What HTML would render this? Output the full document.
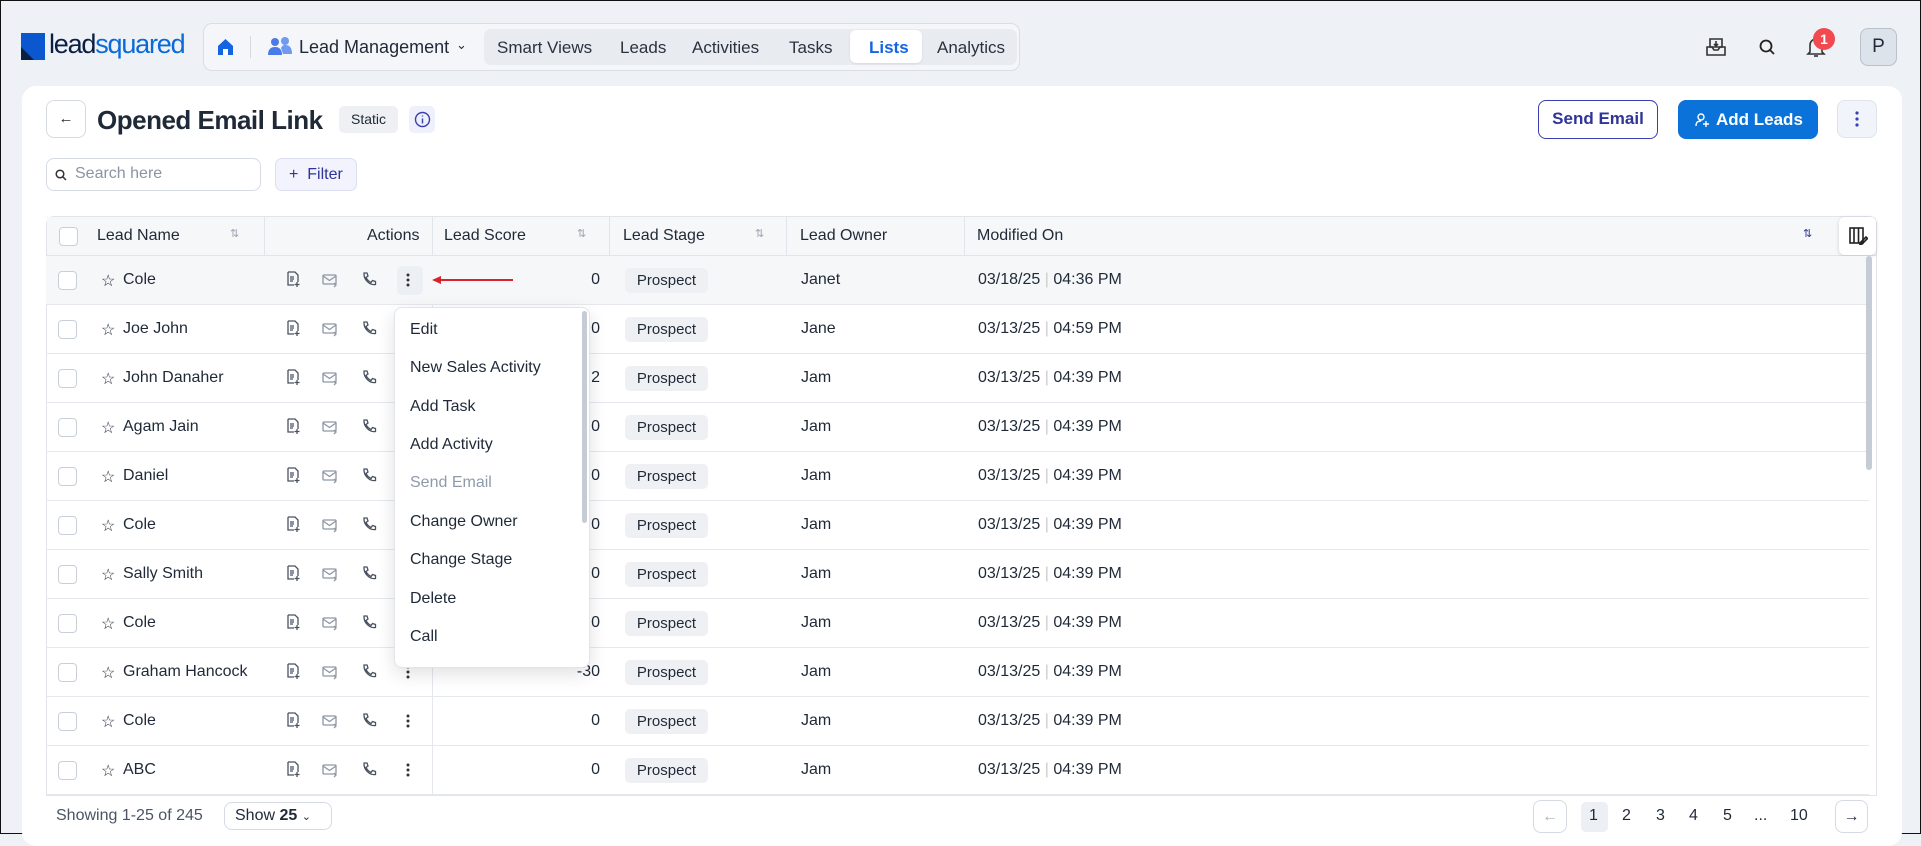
<!DOCTYPE html>
<html><head><meta charset="utf-8"><style>
*{box-sizing:border-box;margin:0;padding:0}
body{width:1921px;height:834px;overflow:hidden;background:#eef1f5;font-family:"Liberation Sans",sans-serif;color:#1f2937;position:relative;border:1px solid #111}
.a{position:absolute}
.nav{left:202px;top:22px;width:817px;height:48px;border:1px solid #d9dee6;border-radius:9px;background:#f4f6f9}
.tabs{left:483px;top:28px;width:533px;height:36px;background:#e8ebf0;border-radius:7px}
.tab{position:absolute;top:37px;font-size:17px;color:#2a3240}
.card{left:21px;top:85px;width:1880px;height:760px;background:#fff;border-radius:14px}
.btn{border:1px solid #d6dbe3;border-radius:8px;background:#fff}
.row{position:absolute;left:45px;width:1823px;height:49px;border-bottom:1px solid #e5e8ed;font-size:16px}
.row span{position:absolute;top:15px}
.row span.s{left:440px;width:114px;text-align:right}
.cb{position:absolute;left:12px;top:15px;width:19px;height:19px;border:1.5px solid #c9cfd8;border-radius:4px;background:#fff}
.pill{position:absolute;left:579px;top:12px;width:83px;height:25px;background:#eef0f3;border-radius:5px;font-size:15px;line-height:25px;text-align:center;color:#1f2937}
.menu{left:393px;top:306px;width:196px;height:361px;background:#fff;border:1px solid #e1e5eb;border-radius:8px;box-shadow:0 6px 18px rgba(0,0,0,.12)}
.menu div{position:absolute;left:15px;font-size:16px;color:#1f2937}
.pg{position:absolute;top:806px;font-size:16px;color:#1f2937}
.d{color:#ccc}
</style></head><body>
<div class="a" style="left:20px;top:32px;width:24px;height:27px;background:#0b57d0"></div>
<div class="a" style="left:20px;top:46px;width:0;height:0;border-left:13px solid #0a1f44;border-top:13px solid transparent"></div>
<div class="a" style="left:48px;top:28px;font-size:27px;letter-spacing:-1.2px;color:#0a1f44">lead<span style="color:#0b6ad9">squared</span></div>
<div class="a nav"></div>
<svg class="a" style="left:216px;top:37px" width="17" height="18" viewBox="0 0 17 18"><path d="M1 8L8.5 1 16 8V17H1Z" fill="#1565e0"/><rect x="6" y="11" width="5" height="6" fill="#fff"/></svg>
<div class="a" style="left:249px;top:35px;width:1px;height:22px;background:#d5dae2"></div>
<svg class="a" style="left:266px;top:35px" width="26" height="20" viewBox="0 0 26 20"><circle cx="8" cy="6" r="4" fill="#4a7be8"/><circle cx="18" cy="5" r="4" fill="#6f9af0"/><path d="M1 19c0-6 3-8 7-8s7 2 7 8z" fill="#4a7be8"/><path d="M14 12c1-2 2-3 4-3 4 0 7 2 7 9h-9z" fill="#6f9af0"/></svg>
<div class="a" style="left:298px;top:36px;font-size:18px;color:#1f2937">Lead Management</div>
<div class="a" style="left:455px;top:36px;font-size:13px">&#8964;</div>
<div class="a tabs"></div>
<div class="a" style="left:849px;top:29px;width:72px;height:33px;background:#fff;border-radius:6px;box-shadow:0 1px 2px rgba(0,0,0,.08)"></div>
<div class="tab" style="left:496px">Smart Views</div>
<div class="tab" style="left:619px">Leads</div>
<div class="tab" style="left:691px">Activities</div>
<div class="tab" style="left:788px">Tasks</div>
<div class="tab" style="left:868px;color:#1565e0;font-weight:bold">Lists</div>
<div class="tab" style="left:936px">Analytics</div>
<svg class="a" style="left:1704px;top:35px" width="22" height="22" viewBox="0 0 22 22" fill="none" stroke="#333" stroke-width="1.6"><path d="M5 3h12v8H5z"/><path d="M2 11h5l2 3h4l2-3h5v8H2z"/><path d="M11 5v5M9 8l2 2 2-2"/></svg>
<svg class="a" style="left:1757px;top:37px" width="18" height="18" viewBox="0 0 18 18" fill="none" stroke="#222" stroke-width="1.8"><circle cx="8" cy="8" r="5.5"/><path d="M12 12l4 4"/></svg>
<svg class="a" style="left:1805px;top:35px" width="20" height="22" viewBox="0 0 20 22" fill="none" stroke="#333" stroke-width="1.6"><path d="M4 16V9a6 6 0 0112 0v7l2 2H2z"/><path d="M8 20h4"/></svg>
<div class="a" style="left:1812px;top:27px;width:22px;height:22px;border-radius:50%;background:#f0494f;color:#fff;font-size:14px;font-weight:bold;text-align:center;line-height:22px">1</div>
<div class="a" style="left:1859px;top:27px;width:37px;height:38px;border-radius:8px;background:#dde3ea;border:1px solid #b8c1cc;font-size:19px;text-align:center;line-height:36px;color:#1f2937">P</div>
<div class="a card"></div>
<div class="a btn" style="left:45px;top:99px;width:40px;height:38px;text-align:center;line-height:36px;font-size:15px">&#8592;</div>
<div class="a" style="left:96px;top:104px;font-size:26px;font-weight:bold;color:#1f2937;letter-spacing:-0.5px">Opened Email Link</div>
<div class="a" style="left:338px;top:105px;width:59px;height:27px;background:#eef0f3;border-radius:5px;font-size:14px;text-align:center;line-height:27px">Static</div>
<div class="a" style="left:408px;top:105px;width:26px;height:27px;background:#eef0fb;border-radius:5px"></div>
<svg class="a" style="left:413px;top:110px" width="17" height="17" viewBox="0 0 17 17" fill="none" stroke="#3a3fb0" stroke-width="1.4"><circle cx="8.5" cy="8.5" r="7"/><path d="M8.5 7.5v5M8.5 4.5v1"/></svg>
<div class="a" style="left:1537px;top:99px;width:120px;height:39px;border:1.5px solid #3a3fb0;border-radius:8px;color:#2e3499;font-weight:bold;font-size:17px;text-align:center;line-height:36px">Send Email</div>
<div class="a" style="left:1677px;top:99px;width:140px;height:39px;background:#0a72d8;border-radius:8px;color:#fff;font-weight:bold;font-size:17px;line-height:39px;padding-left:38px">Add Leads</div>
<svg class="a" style="left:1694px;top:111px" width="16" height="16" viewBox="0 0 16 16" fill="none" stroke="#fff" stroke-width="1.4"><circle cx="6" cy="5" r="3"/><path d="M1 14c0-4 2-5 5-5M11 9v6M8 12h6"/></svg>
<div class="a" style="left:1836px;top:99px;width:40px;height:38px;background:#f2f4fb;border:1px solid #dfe3ea;border-radius:8px"></div>
<svg class="a" style="left:1836px;top:99px" width="40" height="38"><circle cx="20" cy="13" r="1.6" fill="#3a3fb0"/><circle cx="20" cy="19" r="1.6" fill="#3a3fb0"/><circle cx="20" cy="25" r="1.6" fill="#3a3fb0"/></svg>
<div class="a btn" style="left:45px;top:157px;width:215px;height:33px"></div>
<svg class="a" style="left:54px;top:168px" width="12" height="12" viewBox="0 0 12 12" fill="none" stroke="#333" stroke-width="1.5"><circle cx="5" cy="5" r="3.8"/><path d="M8 8l3 3"/></svg>
<div class="a" style="left:74px;top:164px;font-size:16px;color:#8a94a3">Search here</div>
<div class="a" style="left:274px;top:157px;width:82px;height:33px;background:#f2f3fc;border:1px solid #dcdff0;border-radius:7px;color:#2e3499;font-size:16px;line-height:31px;padding-left:13px">+&nbsp; Filter</div>
<div class="a" style="left:45px;top:215px;width:1831px;height:580px;border:1px solid #e1e5eb;border-radius:8px 8px 0 0"></div>
<div class="a" style="left:46px;top:216px;width:1829px;height:39px;background:#f5f7f9;border-bottom:1px solid #e1e5eb;font-size:16px">
<div class="cb" style="top:10px"></div>
<span class="a" style="left:50px;top:10px">Lead Name</span><span class="a" style="left:183px;top:10px;font-size:11px;color:#9aa3b0">&#8645;</span>
<span class="a" style="left:217px;top:-1px;width:1px;height:40px;background:#e1e5eb"></span>
<span class="a" style="left:320px;top:10px">Actions</span>
<span class="a" style="left:385px;top:-1px;width:1px;height:40px;background:#e1e5eb"></span>
<span class="a" style="left:397px;top:10px">Lead Score</span><span class="a" style="left:530px;top:10px;font-size:11px;color:#9aa3b0">&#8645;</span>
<span class="a" style="left:562px;top:-1px;width:1px;height:40px;background:#e1e5eb"></span>
<span class="a" style="left:576px;top:10px">Lead Stage</span><span class="a" style="left:708px;top:10px;font-size:11px;color:#9aa3b0">&#8645;</span>
<span class="a" style="left:739px;top:-1px;width:1px;height:40px;background:#e1e5eb"></span>
<span class="a" style="left:753px;top:10px">Lead Owner</span>
<span class="a" style="left:917px;top:-1px;width:1px;height:40px;background:#e1e5eb"></span>
<span class="a" style="left:930px;top:10px">Modified On</span><span class="a" style="left:1756px;top:10px;font-size:11px;color:#2e3499">&#8645;</span>
</div>
<div class="a" style="left:1838px;top:216px;width:37px;height:38px;background:#fff;border-radius:6px;box-shadow:0 1px 4px rgba(0,0,0,.15)"></div>
<svg class="a" style="left:1848px;top:225px" width="19" height="19" viewBox="0 0 19 19" fill="none" stroke="#222" stroke-width="1.6"><rect x="1" y="2" width="13" height="15"/><path d="M5 2v15M9.5 2v15M11 17l6-6 1.5 1.5-6 6h-1.5z"/></svg>
<div class="a" style="left:431px;top:304px;width:1px;height:490px;background:#e5e8ed"></div>

<div class="row" style="top:255px;background:#f5f7f9"><div class="cb"></div><span style="left:55px">☆</span><span style="left:77px">Cole</span><span class="s">0</span><div class="pill">Prospect</div><span style="left:755px">Janet</span><span style="left:932px">03/18/25 <span class="d" style="position:static">|</span> 04:36 PM</span></div>
<div class="row" style="top:304px"><div class="cb"></div><span style="left:55px">☆</span><span style="left:77px">Joe John</span><span class="s">0</span><div class="pill">Prospect</div><span style="left:755px">Jane</span><span style="left:932px">03/13/25 <span class="d" style="position:static">|</span> 04:59 PM</span></div>
<div class="row" style="top:353px"><div class="cb"></div><span style="left:55px">☆</span><span style="left:77px">John Danaher</span><span class="s">2</span><div class="pill">Prospect</div><span style="left:755px">Jam</span><span style="left:932px">03/13/25 <span class="d" style="position:static">|</span> 04:39 PM</span></div>
<div class="row" style="top:402px"><div class="cb"></div><span style="left:55px">☆</span><span style="left:77px">Agam Jain</span><span class="s">0</span><div class="pill">Prospect</div><span style="left:755px">Jam</span><span style="left:932px">03/13/25 <span class="d" style="position:static">|</span> 04:39 PM</span></div>
<div class="row" style="top:451px"><div class="cb"></div><span style="left:55px">☆</span><span style="left:77px">Daniel</span><span class="s">0</span><div class="pill">Prospect</div><span style="left:755px">Jam</span><span style="left:932px">03/13/25 <span class="d" style="position:static">|</span> 04:39 PM</span></div>
<div class="row" style="top:500px"><div class="cb"></div><span style="left:55px">☆</span><span style="left:77px">Cole</span><span class="s">0</span><div class="pill">Prospect</div><span style="left:755px">Jam</span><span style="left:932px">03/13/25 <span class="d" style="position:static">|</span> 04:39 PM</span></div>
<div class="row" style="top:549px"><div class="cb"></div><span style="left:55px">☆</span><span style="left:77px">Sally Smith</span><span class="s">0</span><div class="pill">Prospect</div><span style="left:755px">Jam</span><span style="left:932px">03/13/25 <span class="d" style="position:static">|</span> 04:39 PM</span></div>
<div class="row" style="top:598px"><div class="cb"></div><span style="left:55px">☆</span><span style="left:77px">Cole</span><span class="s">0</span><div class="pill">Prospect</div><span style="left:755px">Jam</span><span style="left:932px">03/13/25 <span class="d" style="position:static">|</span> 04:39 PM</span></div>
<div class="row" style="top:647px"><div class="cb"></div><span style="left:55px">☆</span><span style="left:77px">Graham Hancock</span><span class="s">-30</span><div class="pill">Prospect</div><span style="left:755px">Jam</span><span style="left:932px">03/13/25 <span class="d" style="position:static">|</span> 04:39 PM</span></div>
<div class="row" style="top:696px"><div class="cb"></div><span style="left:55px">☆</span><span style="left:77px">Cole</span><span class="s">0</span><div class="pill">Prospect</div><span style="left:755px">Jam</span><span style="left:932px">03/13/25 <span class="d" style="position:static">|</span> 04:39 PM</span></div>
<div class="row" style="top:745px"><div class="cb"></div><span style="left:55px">☆</span><span style="left:77px">ABC</span><span class="s">0</span><div class="pill">Prospect</div><span style="left:755px">Jam</span><span style="left:932px">03/13/25 <span class="d" style="position:static">|</span> 04:39 PM</span></div>

<svg class="a" style="left:0;top:0" width="1921" height="834">
<defs>
<g id="doc" fill="none" stroke="#4a5260" stroke-width="1.3"><path d="M2 1h7l3 3v7M2 1v13h6"/><path d="M4 6h4M4 8h4M4 10h3"/><path d="M11 11v5M8.5 13.5h5"/></g>
<g id="mail" fill="none" stroke="#8c96a4" stroke-width="1.3"><rect x="1" y="3" width="13" height="9" rx="1"/><path d="M1 4l6.5 4.5L14 4M12 11l2 2-2 2"/></g>
<g id="ph" fill="none" stroke="#4a5260" stroke-width="1.3"><path d="M3 1l3 0 1 3-2 1.5c1 2 3 4 5 5L11.5 8.5l3 1v3c-6 1-12-5-11.5-11.5z"/></g>
<g id="kb" fill="#333"><circle cx="0" cy="-5" r="1.5"/><circle cx="0" cy="0" r="1.5"/><circle cx="0" cy="5" r="1.5"/></g>
</defs>
<rect x="396" y="265" width="26" height="29" rx="5" fill="#eceff3"/>
<g id="r">
<use href="#doc" x="285" y="270"/><use href="#mail" x="321" y="271"/><use href="#ph" x="360" y="271"/><use href="#kb" x="407" y="279"/>
</g>
<use href="#r" y="49"/><use href="#r" y="98"/><use href="#r" y="147"/><use href="#r" y="196"/><use href="#r" y="245"/><use href="#r" y="294"/><use href="#r" y="343"/><use href="#r" y="392"/><use href="#r" y="441"/><use href="#r" y="490"/>
<path d="M438 279H512" stroke="#d8232a" stroke-width="2"/><path d="M431 279l9-4v8z" fill="#d8232a"/>
<rect x="1865" y="255" width="6" height="214" rx="3" fill="#c5ccd6"/>
</svg>

<div class="a menu">
<div style="top:13px">Edit</div>
<div style="top:51px">New Sales Activity</div>
<div style="top:90px">Add Task</div>
<div style="top:128px">Add Activity</div>
<div style="top:166px;color:#8f9aab">Send Email</div>
<div style="top:205px">Change Owner</div>
<div style="top:243px">Change Stage</div>
<div style="top:282px">Delete</div>
<div style="top:320px">Call</div>
<span class="a" style="left:187px;top:3px;width:5px;height:212px;border-radius:3px;background:#c5ccd6"></span>
</div>

<div class="a" style="left:55px;top:806px;font-size:16px;color:#4a5463">Showing 1-25 of 245</div>
<div class="a btn" style="left:223px;top:801px;width:108px;height:28px;font-size:16px;line-height:26px;padding-left:10px">Show <b>25</b> <span style="font-size:11px">&#8964;</span></div>
<div class="a btn" style="left:1532px;top:799px;width:34px;height:33px;text-align:center;line-height:31px;color:#aab2bf">&#8592;</div>
<div class="a" style="left:1580px;top:801px;width:27px;height:30px;background:#eceff3;border-radius:5px"></div>
<div class="pg" style="left:1588px">1</div><div class="pg" style="left:1621px">2</div><div class="pg" style="left:1655px">3</div><div class="pg" style="left:1688px">4</div><div class="pg" style="left:1722px">5</div><div class="pg" style="left:1753px">...</div><div class="pg" style="left:1789px">10</div>
<div class="a btn" style="left:1834px;top:799px;width:33px;height:33px;text-align:center;line-height:31px">&#8594;</div>
</body></html>
